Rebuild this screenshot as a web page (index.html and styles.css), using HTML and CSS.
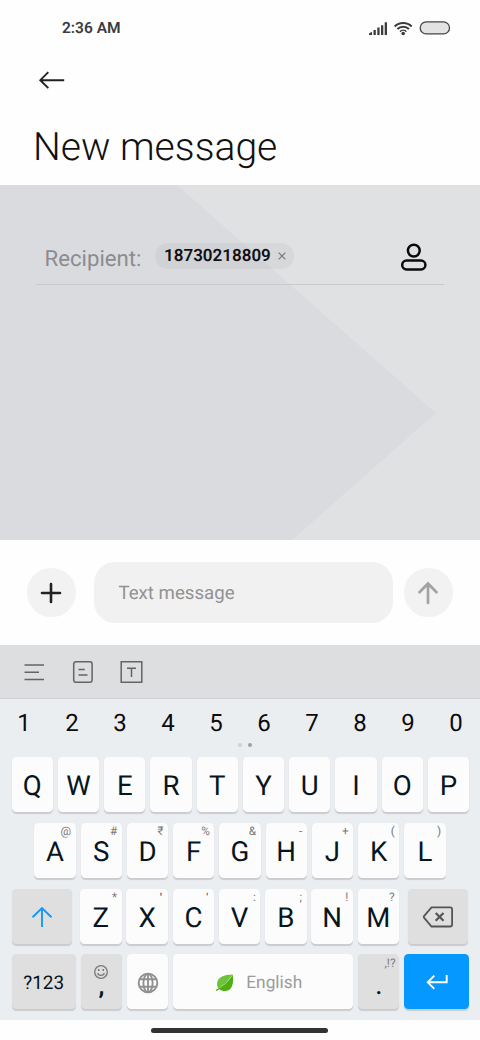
FILE: index.html
```html
<!DOCTYPE html>
<html lang="en">
<head>
<meta charset="utf-8">
<title>New message</title>
<link rel="stylesheet" href="styles.css">
</head>
<body>
<div class="phone">
  <header class="header">
    <div class="status">
      <span class="clock">2:36 AM</span>
      <svg class="status-icons" width="84" height="20" viewBox="0 0 84 20">
        <g fill="#3c3c3e">
          <path d="M1 17v-1.500l3-1.700V17z"/>
          <rect x="5.500" y="12" width="2.300" height="5"/><rect x="9.300" y="9.500" width="2.300" height="7.500"/><rect x="13" y="7.300" width="2.300" height="9.700"/><rect x="16.700" y="4.300" width="2.300" height="12.700"/>
          <circle cx="35.200" cy="15.500" r="1.800"/>
        </g>
        <g fill="none" stroke="#3c3c3e" stroke-width="2.100">
          <path d="M26.700 8.400a12.300 12.300 0 0 1 17 0"/><path d="M29.400 11a8.500 8.500 0 0 1 11.600 0"/><path d="M32 13.600a4.600 4.600 0 0 1 6.400 0" stroke-width="1.500"/>
        </g>
        <rect x="52.200" y="3.900" width="29.300" height="12" rx="6" fill="#e3e3e4" stroke="#454547" stroke-width="1.300"/>
      </svg>
    </div>
    <svg class="back" width="30" height="22" viewBox="0 0 30 22" fill="none" stroke="#222" stroke-width="1.900"><path d="M27.200 11.200H3.500M11.300 3.200L3.300 11.200L11.300 19.200"/></svg>
    <h1 class="title">New message</h1>
  </header>

  <main class="thread">
    <div class="recipient">
      <span class="recipient-label">Recipient:</span>
      <span class="chip">18730218809
        <svg width="8" height="8" viewBox="0 0 8 8" stroke="#77787a" stroke-width="1.200"><path d="M.7.700l6.600 6.600M7.300.700L.7 7.300"/></svg>
      </span>
      <svg class="contact" width="28" height="30" viewBox="0 0 28 30" fill="none" stroke="#0a0a0a" stroke-width="2.500"><circle cx="13.800" cy="8.600" r="5.900"/><rect x="2.200" y="18.600" width="23.200" height="8.900" rx="4.400"/></svg>
    </div>
  </main>

  <section class="composer">
    <span class="round"><svg width="24" height="24" viewBox="0 0 24 24" stroke="#222" stroke-width="2.600" stroke-linecap="round"><path d="M12 3v18M3 12h18"/></svg></span>
    <span class="field">Text message</span>
    <span class="round"><svg width="24" height="24" viewBox="0 0 24 24" fill="none" stroke="#a3a3a3" stroke-width="2.700" stroke-linecap="round"><path d="M12 22V2.500M3.500 11.300L12 2.500L20.500 11.300"/></svg></span>
  </section>

  <div class="toolbar">
    <svg width="22" height="24" viewBox="0 0 22 24" stroke="#636466" stroke-width="1.500"><path d="M1.500 5.100h19.500M1.500 12.300h14.500M1.500 19.600h19.500"/></svg>
    <svg width="22" height="24" viewBox="0 0 22 24" fill="none" stroke="#636466" stroke-width="1.500"><rect x="1.700" y="1.700" width="18.400" height="20.600" rx="2.300"/><path d="M6.500 9.500h6.300M6.500 14.900h9"/></svg>
    <svg width="24" height="24" viewBox="0 0 24 24" fill="none" stroke="#636466" stroke-width="1.500"><path d="M1.200 1.700h20.600v20.600H1.200zM7 8.200h9M11.500 8.200v8.800"/></svg>
  </div>

  <section class="keyboard">
    <div class="digits"><span>1</span><span>2</span><span>3</span><span>4</span><span>5</span><span>6</span><span>7</span><span>8</span><span>9</span><span>0</span></div>
    <div class="dots"><i class="dot"></i><i class="dot dot-on"></i></div>
    <div class="keys">
      <div class="row">
        <span class="key">Q</span><span class="key">W</span><span class="key">E</span><span class="key">R</span><span class="key">T</span><span class="key">Y</span><span class="key">U</span><span class="key">I</span><span class="key">O</span><span class="key">P</span>
      </div>
      <div class="row row-mid">
        <span class="key">A<small>@</small></span><span class="key">S<small>#</small></span><span class="key">D<small>₹</small></span><span class="key">F<small>%</small></span><span class="key">G<small>&amp;</small></span><span class="key">H<small>-</small></span><span class="key">J<small>+</small></span><span class="key">K<small>(</small></span><span class="key">L<small>)</small></span>
      </div>
      <div class="row">
        <span class="key key-grey key-shift"><svg width="22" height="22" viewBox="0 0 22 22" fill="none" stroke="#1598fb" stroke-width="1.900"><path d="M11 21V2M1.500 11.300L11 2L20.500 11.300"/></svg></span>
        <span class="key">Z<small>*</small></span><span class="key">X<small class="tick">'</small></span><span class="key">C<small class="tick tick-thin">'</small></span><span class="key">V<small>:</small></span><span class="key">B<small>;</small></span><span class="key">N<small>!</small></span><span class="key">M<small>?</small></span>
        <span class="key key-grey key-delete"><svg width="32" height="22" viewBox="0 0 32 22" fill="none" stroke="#555" stroke-width="1.800"><path d="M9.500 1.300h18.600a2 2 0 0 1 2 2v15.200a2 2 0 0 1-2 2H9.500L2 11.600q-.6-.7 0-1.400z"/><path d="M13.700 7l7.800 7.800M21.500 7l-7.800 7.800" stroke-width="2.200"/></svg></span>
      </div>
      <div class="row">
        <span class="key key-grey key-symbols">?123</span>
        <span class="key key-grey key-comma">
          <svg width="16" height="16" viewBox="0 0 16 16" fill="none" stroke="#77787a" stroke-width="1.300"><circle cx="8" cy="8" r="6.300"/><path d="M4.700 9.200c.5 3 6.100 3 6.600 0"/><path d="M5.700 5v2M10.300 5v2" stroke-width="1.500"/></svg>
          <b>,</b>
        </span>
        <span class="key key-globe"><svg width="22" height="22" viewBox="0 0 22 22" fill="none" stroke="#919191" stroke-width="1.900"><circle cx="11" cy="11" r="9.300"/><ellipse cx="11" cy="11" rx="4.600" ry="9.200"/><path d="M11 2v18M3 7.300h16M3 14.700h16"/></svg></span>
        <span class="key key-space">
          <svg width="19" height="18" viewBox="0 0 19 18"><path d="M17.700.500C9 .7 2.200 3 2 10c0 2 .5 3.300 1.500 4.500L11 9z" fill="#6fc23c"/><path d="M17.700.500C19 9 17.500 16.500 10.500 17c-2.500.2-4.500-.5-6-1.800L1.200 17l-.5-1.200C8 12.500 13.500 8 17.700.500z" fill="#4fae10"/></svg>
          English
        </span>
        <span class="key key-grey key-period">.<small>,!?</small></span>
        <span class="key key-enter"><svg width="22" height="16" viewBox="0 0 22 16" fill="none" stroke="#fff" stroke-width="1.900"><path d="M20.700 0v7.300H2M8.300.700L1.800 7.300L8.300 13.800"/></svg></span>
      </div>
    </div>
  </section>
  <footer class="nav"><i class="nav-bar"></i></footer>
</div>
</body>
</html>
```
FILE: styles.css
```css
* { box-sizing: border-box; }
body { margin: 0; background: #fefefe; font-family: Roboto, sans-serif; text-rendering: geometricPrecision; }
svg { display: block; flex: none; }
.phone { width: 480px; height: 1040px; display: flex; flex-direction: column; overflow: hidden; }

.header { height: 185px; flex: none; }
.status { display: flex; justify-content: space-between; align-items: center; padding: 17px 28.300px 0 62px; height: 38px; }
.clock { font-size: 15.500px; font-weight: 600; color: #3c3c3e; }
.back { margin: 31px 0 0 36.800px; }
.title { margin: 33px 0 0 33px; font-size: 39.100px; line-height: 46px; font-weight: 300; color: #111; white-space: nowrap; }

.thread { height: 355px; flex: none; padding: 45px 36px 0 36px; position: relative; background: #e0e1e3; }
.thread::before { content: ""; position: absolute; inset: 0; background: #dadbdf; clip-path: polygon(0 0, 177px 0, 436px 228px, 292px 100%, 0 100%); }
.recipient { position: relative; display: flex; align-items: center; height: 55px; padding: 0 16px 0 8.500px; border-bottom: 1px solid #c8c9cc; }
.recipient-label { width: 110.500px; padding-top: 3px; font-size: 22.200px; color: #8b8c8f; }
.chip { display: flex; align-items: center; gap: 7px; height: 26px; width: 139px; padding: 1px 0 0 9px; margin-top: -3px; border-radius: 13px; background: rgba(0, 0, 0, .04); font-size: 17px; font-weight: 600; color: #101010; }
.contact { margin-left: auto; }

.composer { height: 105px; flex: none; display: flex; align-items: center; padding: 0 27px; }
.round { width: 48.500px; height: 48.500px; border-radius: 50%; background: #f2f2f2; display: grid; place-items: center; }
.field { width: 299px; height: 61px; margin: 0 11px 0 18.500px; padding-left: 24.500px; border-radius: 21px; background: #f1f1f1; color: #929292; font-size: 18.650px; line-height: 63px; }

.toolbar { height: 54px; flex: none; display: flex; align-items: center; gap: 27px; padding: 1px 0 0 23px; background: #dddee0; border-bottom: 1px solid #cfd1d4; }
.toolbar svg:last-child { margin-left: -1px; }

.keyboard { height: 321px; flex: none; background: #ebeef1; }
.digits { display: grid; grid-template-columns: repeat(10, 48px); height: 44px; padding-top: 10px; line-height: 28px; font-size: 24px; text-align: center; color: #0b0b0b; }
.dots { height: 14px; display: flex; justify-content: center; gap: 6px; padding: 0 0 0 9px; }
.dot { width: 4px; height: 4px; border-radius: 50%; background: #cdd0d3; }
.dot-on { background: #9da0a3; }
.keys { padding: 0 11.600px; display: grid; gap: 10.800px; }
.row { display: flex; gap: 4.960px; height: 55px; }
.row-mid { padding-left: 22.700px; }
.key { position: relative; width: 41.300px; height: 55px; flex: none; display: flex; align-items: center; justify-content: center; border-radius: 4.500px; background: #fcfcfc; box-shadow: 0 1.200px 1px #c9ccd0; color: #07151f; font-size: 27.600px; line-height: 1; padding-top: 3px; }
.key small { position: absolute; top: 3px; right: 4.500px; font-size: 11.800px; line-height: 11px; color: #77797c; }
.key .tick { font-size: 11px; right: 6px; font-weight: 700; color: #55585c; }
.key .tick-thin { font-weight: 500; }
.key-grey { background: #dfdfdf; }
.key-shift { width: 60px; margin-right: 3.700px; padding-top: 1px; }
.key-delete { width: 60px; margin-left: 4.500px; padding-top: 1px; }
.key-symbols { width: 64.200px; font-size: 18.900px; }
.key-comma { flex-direction: column; justify-content: flex-start; padding-top: 10px; font-size: 24px; }
.key-comma b { line-height: 20px; margin-top: -4px; }
.key-globe { padding-top: 2px; }
.key-space { width: 180px; gap: 12px; padding-right: 9px; font-size: 17.300px; color: #9a9b9c; }
.key-period { padding-top: 9px; font-weight: 500; font-size: 24px; }
.key-period small { top: 4px; right: 4px; font-weight: 400; }
.key-enter { width: 64.200px; background: #0598fe; }
.nav { flex: none; height: 20px; padding-top: 8px; }
.nav-bar { display: block; width: 177px; height: 4.500px; margin-left: 151px; border-radius: 3px; background: #333; }
```
